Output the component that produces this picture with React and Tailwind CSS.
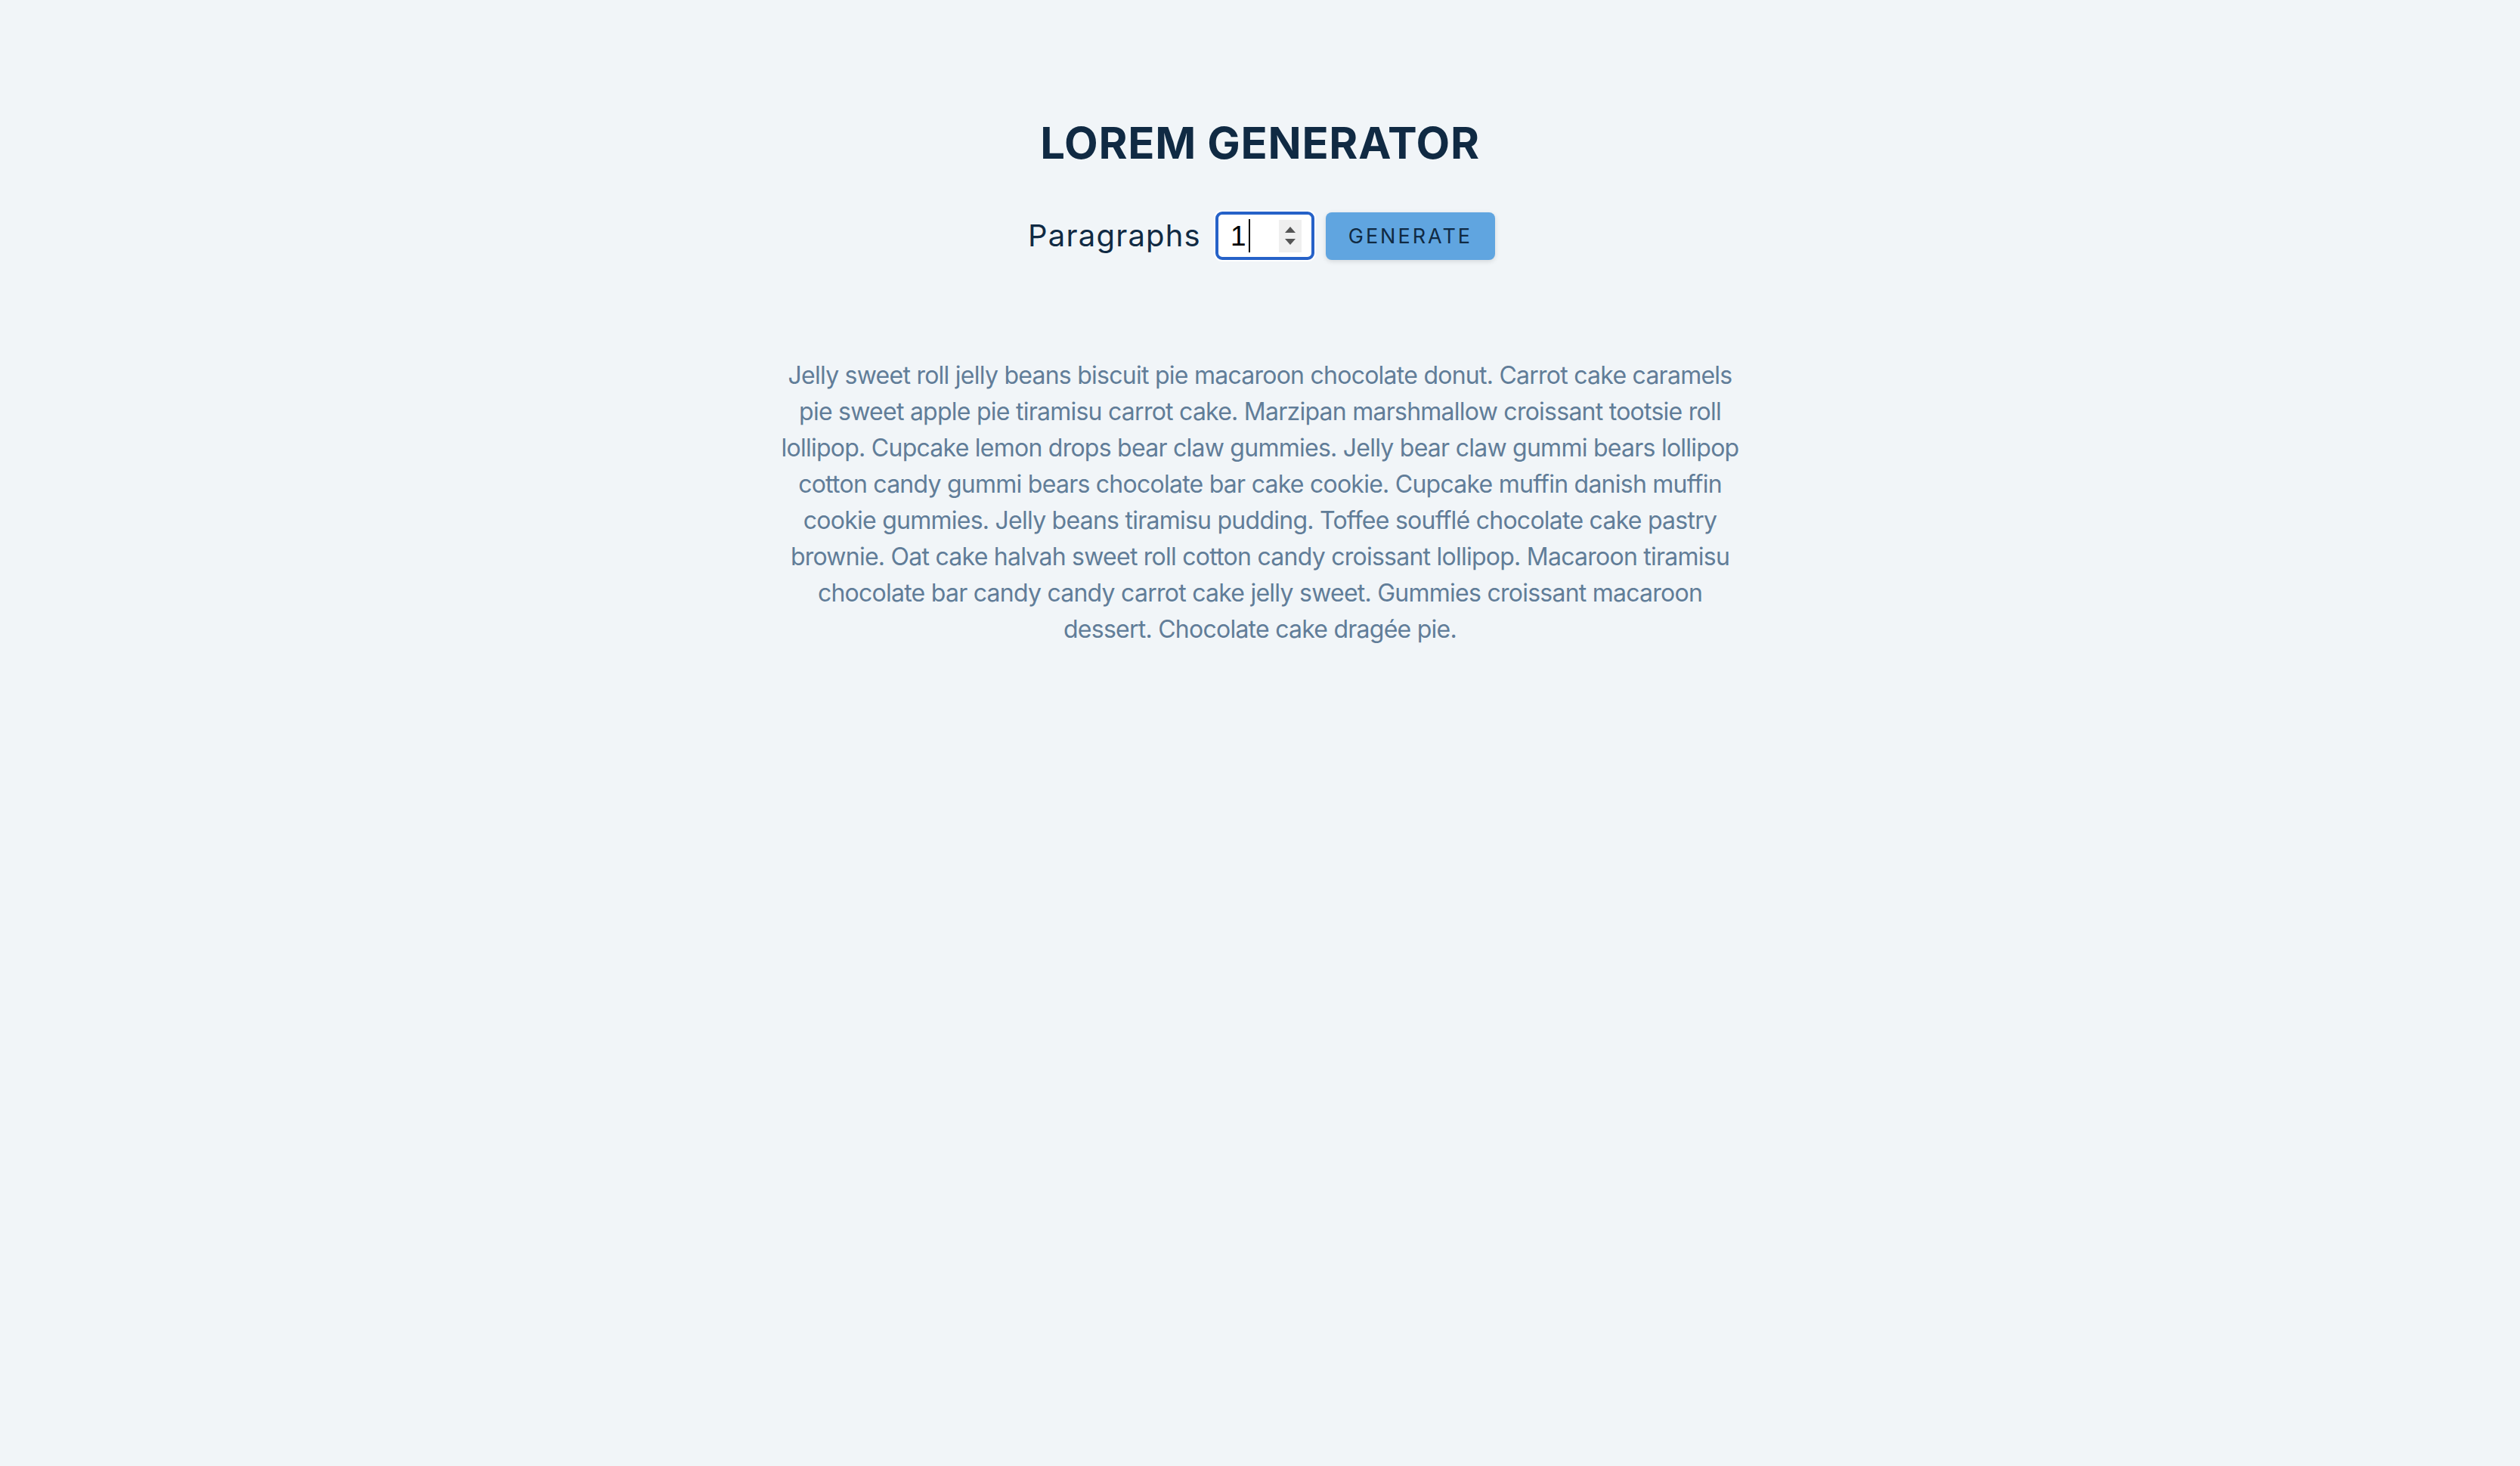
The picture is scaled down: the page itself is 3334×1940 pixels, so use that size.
export default function App() {
  return (
    <div
      className="min-h-[1940px] w-full bg-[#f1f5f8] flex flex-col items-center pt-[160px]"
      style={{ fontFamily: "Inter, 'Noto Sans', sans-serif" }}
    >
      <h1 className="text-[58px] leading-none font-bold tracking-[0.7px] text-[#102a43]">
        LOREM GENERATOR
      </h1>
      <div className="mt-[62px] flex items-center pl-[4px]">
        <span className="text-[40px] leading-none tracking-[1.2px] text-[#102a43]">Paragraphs</span>
        <div className="ml-[19px] rounded-[9px] bg-white shadow-[0_0_0_2px_#ffffff]">
          <div className="w-[131px] h-[64px] rounded-[9px] border-[4px] border-[#2662c8] bg-white flex items-center pl-[16px] pr-[13px]">
            <span className="text-[37px] leading-none text-black" style={{ fontFamily: "'Liberation Sans', Arial, sans-serif" }}>1</span>
            <span className="ml-[3px] w-[2px] h-[44px] bg-black" />
            <div className="ml-auto w-[30px] h-[43px] bg-[#efefef] flex flex-col items-center justify-center gap-[8px]">
              <svg width="14" height="8" viewBox="0 0 14 8"><path d="M7 0L14 8H0z" fill="#555" /></svg>
              <svg width="14" height="8" viewBox="0 0 14 8"><path d="M0 0H14L7 8z" fill="#555" /></svg>
            </div>
          </div>
        </div>
        <button className="ml-[15px] w-[224px] h-[63px] rounded-[8px] bg-[#60a5e0] shadow-[0_2px_6px_rgba(0,0,0,0.12)] text-[27px] leading-none tracking-[3px] text-[#102a43] flex items-center justify-center">
          GENERATE
        </button>
      </div>
      <article className="mt-[129px] w-[1272px]">
        <p className="text-[32px] leading-[48px] tracking-[-0.75px] text-[#617d98] text-center">
          Jelly sweet roll jelly beans biscuit pie macaroon chocolate donut. Carrot cake caramels pie sweet apple pie tiramisu carrot cake. Marzipan marshmallow croissant tootsie roll lollipop. Cupcake lemon drops bear claw gummies. Jelly bear claw gummi bears lollipop cotton candy gummi bears chocolate bar cake cookie. Cupcake muffin danish muffin cookie gummies. Jelly beans tiramisu pudding. Toffee soufflé chocolate cake pastry brownie. Oat cake halvah sweet roll cotton candy croissant lollipop. Macaroon tiramisu chocolate bar candy candy carrot cake jelly sweet. Gummies croissant macaroon dessert. Chocolate cake dragée pie.
        </p>
      </article>
    </div>
  );
}
